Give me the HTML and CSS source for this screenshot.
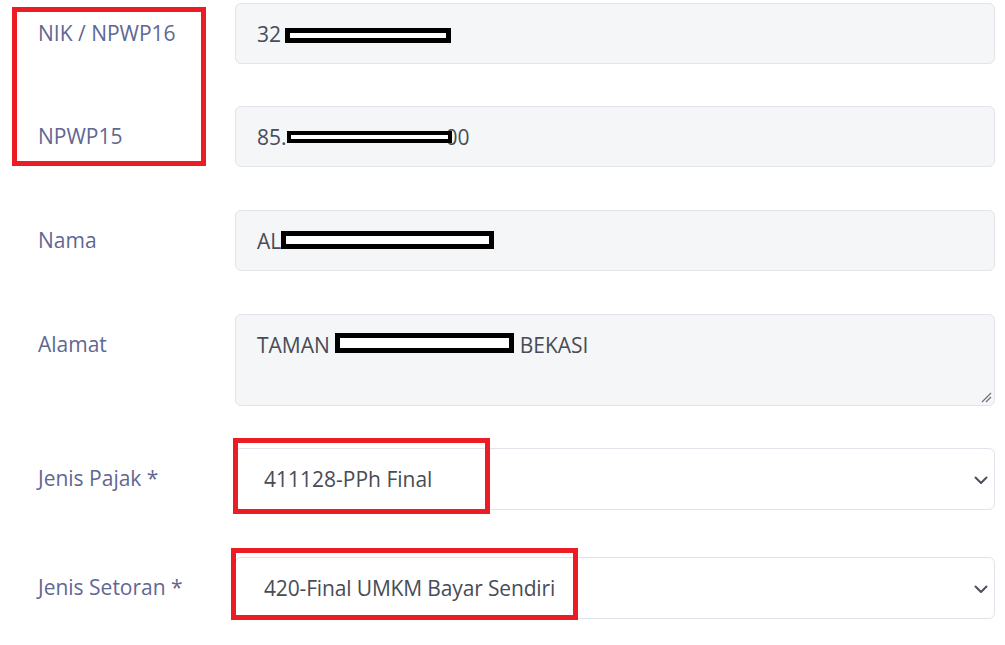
FILE: index.html
```html
<!DOCTYPE html>
<html lang="id">
<head>
<meta charset="utf-8">
<title>Form</title>
<link rel="stylesheet" href="styles.css">
</head>
<body>
<div class="page">
  <div class="form">
    <div class="row">
      <div class="label">NIK / NPWP16</div>
      <div class="field">32<span class="redact r1"></span></div>
    </div>
    <div class="row">
      <div class="label">NPWP15</div>
      <div class="field">85.<span class="redact r2"></span><span class="tail">00</span></div>
    </div>
    <div class="row">
      <div class="label">Nama</div>
      <div class="field">AL<span class="redact r3"></span></div>
    </div>
    <div class="row">
      <div class="label">Alamat</div>
      <div class="field area">TAMAN <span class="redact r4"></span> BEKASI
        <svg class="grip" width="12" height="12" viewBox="0 0 12 12"><path d="M11 2 L2 11 M11 6 L6 11" stroke="#6b6f78" stroke-width="1.2" fill="none"/></svg>
      </div>
    </div>
    <div class="row">
      <div class="label">Jenis Pajak *</div>
      <div class="field select"><span>411128-PPh Final</span>
        <svg class="chev" width="14" height="9" viewBox="0 0 14 9"><path d="M1.5 1.5 L7 7 L12.5 1.5" stroke="#4a4f5a" stroke-width="2" fill="none" stroke-linecap="round" stroke-linejoin="round"/></svg>
      </div>
    </div>
    <div class="row">
      <div class="label">Jenis Setoran *</div>
      <div class="field select"><span class="tight">420-Final UMKM Bayar Sendiri</span>
        <svg class="chev" width="14" height="9" viewBox="0 0 14 9"><path d="M1.5 1.5 L7 7 L12.5 1.5" stroke="#4a4f5a" stroke-width="2" fill="none" stroke-linecap="round" stroke-linejoin="round"/></svg>
      </div>
    </div>
  </div>
  <div class="mark m1"></div>
  <div class="mark m2"></div>
  <div class="mark m3"></div>
</div>
</body>
</html>
```

FILE: styles.css
```css
* { box-sizing: border-box; }
html, body { margin: 0; padding: 0; background: #ffffff; }
body {
  font-family: "Open Sans", "Noto Sans", sans-serif;
  font-size: 21px;
  line-height: 29px;
  width: 1005px;
  height: 645px;
  overflow: hidden;
}
.page { position: relative; width: 1005px; height: 645px; }
.form {
  display: grid;
  grid-template-rows: 103px 104px 104px 134px 109px 62px;
  padding: 3px 10px 0 0;
}
.row {
  display: grid;
  grid-template-columns: 235px 1fr;
  align-items: start;
}
.label {
  color: #5f6793;
  padding: 16px 0 0 38px;
  white-space: nowrap;
}
.field {
  position: relative;
  height: 61px;
  background: #f5f6f8;
  border: 1px solid #e2e4ea;
  border-radius: 6px;
  color: #474c57;
  padding: 16px 20px 0 21px;
  white-space: nowrap;
}
.field.area { height: 92px; }
.field.select {
  height: 62px;
  background: #ffffff;
  border-color: #e1e3ea;
  padding: 16px 0 0 28px;
  display: flex;
  justify-content: space-between;
  align-items: flex-start;
}
.tight { letter-spacing: -0.15px; }
.tail { margin-left: -6px; }
.chev { margin: 11px 6px 0 0; }
.grip { position: absolute; right: 2px; bottom: 2px; }
.redact {
  position: relative;
  z-index: 1;
  display: inline-block;
  background: #ffffff;
  border: 5px solid #000000;
}
.r1 { width: 166px; height: 15px; margin-left: 4px; vertical-align: -1px; }
.r2 { width: 165px; height: 12px; border-width: 4px; vertical-align: 2px; }
.r3 { width: 213px; height: 18px; vertical-align: 0; }
.r4 { width: 179px; height: 20px; vertical-align: 0; }
.mark {
  position: absolute;
  border: 5px solid #ec1c24;
}
.m1 { left: 12px; top: 7px; width: 194px; height: 159px; }
.m2 { left: 233px; top: 438px; width: 257px; height: 76px; }
.m3 { left: 231px; top: 548px; width: 347px; height: 72px; }
```
